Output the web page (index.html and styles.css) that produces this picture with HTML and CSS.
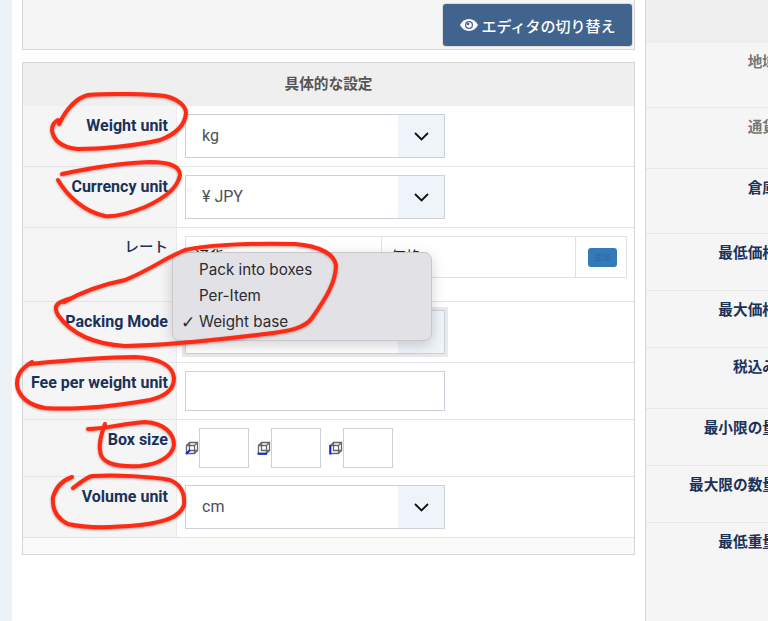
FILE: index.html
```html
<!DOCTYPE html>
<html lang="en">
<head>
    <meta charset="UTF-8">
    <title>Shipping settings</title>
    <link rel="stylesheet" href="styles.css">
</head>
<body>
    <div class="page">
        <div class="sidebar"></div>

        <div class="left">
            <div class="panel-top">
                <button class="btn-editor">
                    <svg class="eye" width="18" height="12" viewBox="0 0 18 12">
                        <path d="M0 6C2 2.300 5.200 0 9 0s7 2.300 9 6c-2 3.700-5.200 6-9 6S2 9.700 0 6z" fill="#fff"/>
                        <circle cx="9" cy="6" r="4" fill="#41648f"/>
                        <circle cx="9" cy="6" r="2.800" fill="#fff"/>
                        <circle cx="8" cy="5" r="1.300" fill="#41648f"/>
                    </svg>
                    エディタの切り替え
                </button>
            </div>

            <div class="panel">
                <div class="panel-header">具体的な設定</div>

                <div class="row">
                    <div class="label">Weight unit</div>
                    <div class="field">
                        <div class="select"><span class="select-value">kg</span><span class="select-arrow"><svg width="15" height="9" viewBox="0 0 15 9"><path d="M1 1l6.500 6.500L14 1" fill="none" stroke="#111" stroke-width="1.800"/></svg></span></div>
                    </div>
                </div>
                <div class="row">
                    <div class="label">Currency unit</div>
                    <div class="field">
                        <div class="select"><span class="select-value">¥ JPY</span><span class="select-arrow"><svg width="15" height="9" viewBox="0 0 15 9"><path d="M1 1l6.500 6.500L14 1" fill="none" stroke="#111" stroke-width="1.800"/></svg></span></div>
                    </div>
                </div>
                <div class="row">
                    <div class="label label-rate">レート</div>
                    <div class="field field-rate">
                        <div class="rate-table">
                            <div class="rate-cell">通貨</div>
                            <div class="rate-cell">価格</div>
                            <div class="rate-cell rate-action"><span class="btn-add">追加</span></div>
                        </div>
                    </div>
                </div>
                <div class="row">
                    <div class="label">Packing Mode</div>
                    <div class="field">
                        <div class="select select-open"><span class="select-value"></span><span class="select-arrow"></span></div>
                    </div>
                </div>
                <div class="row">
                    <div class="label">Fee per weight unit</div>
                    <div class="field">
                        <div class="input input-wide"></div>
                    </div>
                </div>
                <div class="row">
                    <div class="label">Box size</div>
                    <div class="field field-box">
                        <div class="box-dim">
                            <svg class="cube" width="14" height="14" viewBox="0 0 14 14"><path d="M4.500 1.500h8v8h-8zM1.500 4.500h8v8h-8zM1.500 4.500l3-3M9.500 4.500l3-3M9.500 12.500l3-3" fill="none" stroke="#666" stroke-width="1.300"/><path d="M1 13l4-4" stroke="#0a28d8" stroke-width="2"/></svg>
                            <div class="input input-small"></div>
                        </div>
                        <div class="box-dim">
                            <svg class="cube" width="14" height="14" viewBox="0 0 14 14"><path d="M4.500 1.500h8v8h-8zM1.500 4.500h8v8h-8zM1.500 4.500l3-3M9.500 4.500l3-3M9.500 12.500l3-3" fill="none" stroke="#666" stroke-width="1.300"/><path d="M0.500 12.800h9.500" stroke="#0a28d8" stroke-width="2"/></svg>
                            <div class="input input-small"></div>
                        </div>
                        <div class="box-dim">
                            <svg class="cube" width="14" height="14" viewBox="0 0 14 14"><path d="M4.500 1.500h8v8h-8zM1.500 4.500h8v8h-8zM1.500 4.500l3-3M9.500 4.500l3-3M9.500 12.500l3-3" fill="none" stroke="#666" stroke-width="1.300"/><path d="M1.200 4v9.500" stroke="#0a28d8" stroke-width="2"/></svg>
                            <div class="input input-small"></div>
                        </div>
                    </div>
                </div>
                <div class="row">
                    <div class="label">Volume unit</div>
                    <div class="field">
                        <div class="select"><span class="select-value">cm</span><span class="select-arrow"><svg width="15" height="9" viewBox="0 0 15 9"><path d="M1 1l6.500 6.500L14 1" fill="none" stroke="#111" stroke-width="1.800"/></svg></span></div>
                    </div>
                </div>
                <div class="panel-footer"></div>
            </div>
        </div>

        <div class="right">
            <div class="right-header"></div>
            <div class="right-row tall"><span class="muted">地域</span></div>
            <div class="right-row mid"><span class="muted">通貨</span></div>
            <div class="right-row tall">倉庫</div>
            <div class="right-row">最低価格</div>
            <div class="right-row">最大価格</div>
            <div class="right-row mid">税込み</div>
            <div class="right-row">最小限の量</div>
            <div class="right-row">最大限の数量</div>
            <div class="right-row right-last">最低重量</div>
        </div>
    </div>

    <div class="menu">
        <div class="menu-item">Pack into boxes</div>
        <div class="menu-item">Per-Item</div>
        <div class="menu-item"><span class="check">✓</span>Weight base</div>
    </div>

    <!-- red marker circles drawn on top of the screenshot -->
    <svg class="marks" width="768" height="621" viewBox="0 0 768 621">
        <g fill="none" stroke="#ff2a14" stroke-width="4" stroke-linecap="round" stroke-linejoin="round">
            <path d="M59 124C66 110 76 98 88 95C110 93 150 94 165 96C178 99 186 106 186 113C185 126 176 134 160 140C135 146 100 149 78 149C62 148 53 140 52 130C52 125 54 122 58 120"/>
            <path d="M62 174C90 168 120 163 150 162C170 162 180 167 180 175C178 187 165 198 145 207C130 213 115 217 105 216C85 212 68 197 58 180"/>
            <path d="M64 302C85 290 105 284 125 280C150 270 165 258 185 250C210 244 260 243 295 244C320 246 334 254 336 265C336 282 326 298 312 318C305 328 290 331 265 334C230 338 180 345 125 346C90 344 70 332 58 315C53 306 56 302 72 298"/>
            <path d="M30 364C60 361 100 357 135 357C160 358 173 366 174 378C174 390 165 396 150 400C115 406 75 410 45 408C28 405 18 396 17 384C17 374 22 368 32 362"/>
            <path d="M88 429C105 429 125 423 145 422C165 423 174 434 174 445C172 456 160 464 140 466C120 467 105 465 101 455C98 445 101 435 105 424"/>
            <path d="M73 488C82 481 87 477 92 476C115 475 150 476 170 480C182 485 185 495 184 505C180 517 165 522 140 525C110 528 85 528 68 524C56 518 52 508 53 497C56 487 63 480 72 477"/>
        </g>
    </svg>
</body>
</html>
```

FILE: styles.css
```css
* {
    box-sizing: border-box;
}
html, body {
    margin: 0;
    height: 100%;
    overflow: hidden;
}
body {
    position: relative;
    font-family: Roboto, "Noto Sans CJK JP", sans-serif;
    font-size: 14.670px;
    line-height: 21px;
    color: #1a3158;
    background-color: #fff;
}
.page {
    display: flex;
    width: 800px;
    height: 621px;
}
.sidebar {
    width: 12px;
    flex: none;
    background-color: #edf2f7;
}
.left {
    width: 613px;
    flex: none;
    margin-left: 10px;
}
.panel-top {
    height: 50px;
    display: flex;
    justify-content: flex-end;
    padding: 4px 2px 0 0;
    background-color: #f5f5f5;
    border: 1px solid #d6d6d6;
    border-width: 0 1px 1px 1px;
}
.btn-editor {
    display: flex;
    align-items: center;
    justify-content: center;
    gap: 4px;
    width: 189px;
    height: 42px;
    padding: 0;
    color: #fff;
    font-family: inherit;
    font-size: 15px;
    font-weight: 500;
    background-color: #41648f;
    border: none;
    border-radius: 3px;
    box-shadow: 0 0 0 1px #dcdcdc;
}
.panel {
    margin-top: 12px;
    border: 1px solid #d6d6d6;
    background-color: #fff;
}
.panel-header {
    height: 43px;
    line-height: 43px;
    text-align: center;
    font-weight: 700;
    color: #555;
    background-color: #efefef;
}
.panel-footer {
    height: 16px;
    background-color: #fafafa;
}
.row {
    display: grid;
    grid-template-columns: 154px 1fr;
    border-bottom: 1px solid #e3e3e8;
}
.label {
    padding: 9px 8px 0 0;
    text-align: right;
    font-size: 16px;
    font-weight: 700;
    background-color: #f5f5f5;
    border-right: 1px solid #ebebeb;
}
.label-rate {
    font-size: 14.500px;
    font-weight: 500;
}
.field {
    padding: 8px;
}
.field-rate {
    padding-bottom: 23px;
}
.select {
    display: flex;
    width: 260px;
    height: 44px;
    background-color: #fff;
    border: 1px solid #ccd0d9;
}
.select-value {
    flex: 1;
    padding-left: 16px;
    line-height: 42px;
    font-size: 16px;
    color: #4a5058;
}
.select-arrow {
    display: flex;
    align-items: center;
    justify-content: center;
    width: 46px;
    background-color: #eff3fa;
}
.select-open {
    box-shadow: 0 0 0 3px #e9e9e9;
}
.input {
    height: 40px;
    background-color: #fff;
    border: 1px solid #ccd0d9;
}
.input-wide {
    width: 260px;
}
.input-small {
    width: 50px;
}
.rate-table {
    display: grid;
    grid-template-columns: 195px 194px 1fr;
    width: 442px;
    height: 42px;
    border: 1px solid #e0e0e6;
    color: #222;
}
.rate-cell {
    padding: 10px 9px;
    border-left: 1px solid #e0e0e6;
}
.rate-cell:first-child {
    border-left: none;
}
.rate-action {
    padding: 11px 0 0 12px;
}
.btn-add {
    display: block;
    width: 29px;
    height: 19px;
    font-size: 8px;
    line-height: 19px;
    text-align: center;
    color: #2a66b0;
    background-color: #337ab7;
    border-radius: 3px;
}
.field-box {
    display: flex;
    gap: 8px;
}
.box-dim {
    display: flex;
    align-items: center;
    width: 64px;
}
.cube {
    flex: none;
}
.right {
    flex: 1;
    margin-left: 10px;
    border-left: 1px solid #d6d6d6;
    background-color: #f5f5f5;
}
.right-header {
    height: 43px;
    background-color: #efefef;
}
.right-row {
    height: 57px;
    padding: 9px 23px 0 0;
    text-align: right;
    font-weight: 700;
    border-bottom: 1px solid #e8e8e8;
}
.right-row.mid {
    height: 61px;
}
.right-row.tall {
    height: 65px;
}
.right-last {
    border-bottom: none;
}
.muted {
    color: #777;
}
.menu {
    position: absolute;
    left: 172px;
    top: 252px;
    width: 260px;
    height: 89px;
    padding: 4px 0 0 26px;
    font-family: Inter, sans-serif;
    font-size: 15.200px;
    color: #2b2b30;
    background-color: #e2e1e6;
    border: 1px solid #c8c7cc;
    border-radius: 8px;
    box-shadow: 0 4px 14px rgba(0, 0, 0, 0.18);
}
.menu-item {
    position: relative;
    height: 26px;
    line-height: 26px;
}
.check {
    position: absolute;
    left: -18px;
    font-family: "DejaVu Sans", sans-serif;
    font-size: 17px;
}
.marks {
    position: absolute;
    top: 0;
    left: 0;
    pointer-events: none;
    filter: drop-shadow(0 1px 1px rgba(90, 30, 20, 0.4));
}
```
